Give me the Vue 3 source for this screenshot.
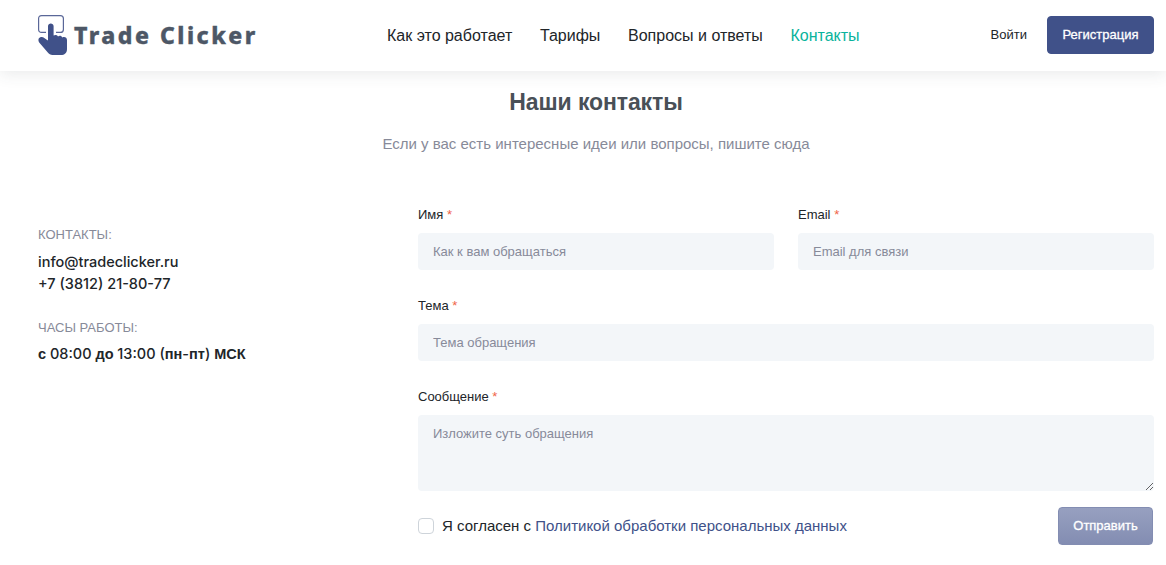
<script setup>
import { ref } from 'vue';

const navItems = [
  { id: 'how', title: 'Как это работает' },
  { id: 'tariffs', title: 'Тарифы' },
  { id: 'faq', title: 'Вопросы и ответы' },
  { id: 'contacts', title: 'Контакты' },
];
const activeItem = ref('contacts');

const form = ref({
  name: '',
  email: '',
  subject: '',
  message: '',
  agree: false,
});

function onSubmit() {
  // Without consent the form is not sent
  if (!form.value.agree) return;
  form.value = { name: '', email: '', subject: '', message: '', agree: false };
}
</script>

<template>
  <div class="page">
    <header class="header">
      <a class="logo">
        <svg class="logo-icon" width="30" height="41" viewBox="0 0 30 41">
          <path
            d="M8 17.4H3.6Q.6 17.4.6 14.4V3.6Q.6.6 3.6.6H22.4Q25.4.6 25.4 3.6V14.4Q25.4 17.4 22.4 17.4H18"
            fill="none"
            stroke="#5a6798"
            stroke-width="1.2"
          />
          <path
            d="M10 11.2C10 7.6 15.6 7.6 15.6 11.2V20.6C17.4 19.4 19.2 20 20 21.4C21.8 20.3 23.6 21 24.3 22.5C26.6 21.4 29 22.6 29 25V34C29 38 26.4 40 23 40H14.5C12.4 40 11 39.2 9.8 37.6L1.2 27.4C-.6 24.8 .8 21.6 4 22C6.4 22.3 7.6 24.4 10 25.6Z"
            fill="#405189"
          />
        </svg>
        <span class="logo-text">Trade Clicker</span>
      </a>
      <nav class="nav">
        <a
          v-for="item in navItems"
          :key="item.id"
          class="nav-link"
          :class="{ active: item.id === activeItem }"
          @click="activeItem = item.id"
        >{{ item.title }}</a>
      </nav>
      <div class="auth">
        <a class="login">Войти</a>
        <button class="btn btn-primary">Регистрация</button>
      </div>
    </header>

    <main class="content">
      <div class="heading">
        <h3>Наши контакты</h3>
        <p>Если у вас есть интересные идеи или вопросы, пишите сюда</p>
      </div>

      <div class="columns">
        <aside class="info">
          <div class="info-title">КОНТАКТЫ:</div>
          <div class="info-text email">info@tradeclicker.ru</div>
          <div class="info-text phone">+7 (3812) 21-80-77</div>
          <div class="info-title hours-title">ЧАСЫ РАБОТЫ:</div>
          <div class="info-text hours"><b>с</b> 08:00 <b>до</b> 13:00 (<b>пн</b>-<b>пт</b>) <b>МСК</b></div>
        </aside>

        <form class="form" @submit.prevent="onSubmit">
          <div class="row">
            <div class="form-group">
              <label for="name">Имя <span class="required">*</span></label>
              <input id="name" v-model="form.name" type="text" placeholder="Как к вам обращаться" />
            </div>
            <div class="form-group">
              <label for="email">Email <span class="required">*</span></label>
              <input id="email" v-model="form.email" type="text" placeholder="Email для связи" />
            </div>
          </div>
          <div class="form-group">
            <label for="subject">Тема <span class="required">*</span></label>
            <input id="subject" v-model="form.subject" type="text" placeholder="Тема обращения" />
          </div>
          <div class="form-group message">
            <label for="message">Сообщение <span class="required">*</span></label>
            <textarea id="message" v-model="form.message" placeholder="Изложите суть обращения"></textarea>
          </div>
          <div class="form-footer">
            <label class="agree">
              <input v-model="form.agree" type="checkbox" class="checkbox" />
              <span class="agree-text">Я согласен с <a class="policy">Политикой обработки персональных данных</a></span>
            </label>
            <button type="submit" class="btn btn-submit" :class="{ ready: form.agree }">Отправить</button>
          </div>
        </form>
      </div>
    </main>
  </div>
</template>

<style>
body {
  margin: 0;
  background: #fff;
}
</style>

<style scoped>
* {
  box-sizing: border-box;
}
.page {
  height: 565px;
  overflow: hidden;
  font-family: "Liberation Sans", Arial, sans-serif;
  font-size: 13px;
  color: #212529;
}
.header {
  display: flex;
  height: 71px;
  padding: 0 12px 0 38px;
  background: #fff;
  box-shadow: 0 2px 16px rgba(56, 65, 74, 0.12);
}
.logo {
  display: flex;
  width: 349px;
  padding-top: 15px;
}
.logo-text {
  margin-left: 6px;
  font-family: "Noto Sans", sans-serif;
  font-size: 23px;
  font-weight: 800;
  line-height: 40px;
  letter-spacing: 2.5px;
  color: #4d5766;
  white-space: nowrap;
  -webkit-text-stroke: 0.4px #4d5766;
}
.nav {
  display: flex;
  gap: 27.7px;
  line-height: 71px;
}
.nav-link {
  font-size: 16px;
  cursor: pointer;
  white-space: nowrap;
}
.nav-link.active {
  color: #0ab39c;
}
.auth {
  display: flex;
  margin-left: auto;
  padding-top: 16px;
}
.login {
  margin-right: 20px;
  line-height: 37px;
}
.btn {
  height: 38px;
  padding: 0 0 2px;
  border: 1px solid #405189;
  border-radius: 4px;
  font-family: inherit;
  font-size: 13px;
  color: #fff;
  cursor: pointer;
}
.btn-primary {
  width: 107px;
  background: #405189;
  -webkit-text-stroke: 0.3px #fff;
}
.content {
  padding: 0 12px 0 38px;
}
.heading {
  text-align: center;
}
.heading h3 {
  margin: 0;
  padding-top: 17px;
  font-size: 23px;
  line-height: 28px;
  letter-spacing: -0.1px;
  color: #495057;
}
.heading p {
  margin: 17px 0 0;
  font-size: 15px;
  line-height: 22px;
  color: #878a99;
}
.columns {
  display: flex;
  padding-top: 50px;
}
.info {
  width: 380px;
  padding-top: 20px;
}
.info-title {
  font-size: 13px;
  line-height: 20px;
  color: #878a99;
}
.info-text {
  font-family: Inter, "Liberation Sans", sans-serif;
  font-size: 14.5px;
  font-weight: 500;
  line-height: 22px;
}
.info-text.email {
  margin-top: 6px;
}
.info-text b {
  font-family: "Liberation Sans", Arial, sans-serif;
  font-weight: 700;
}
.hours-title {
  margin-top: 23px;
}
.info-text.hours {
  margin-top: 5px;
}
.form {
  flex: 1;
}
.row {
  display: flex;
  gap: 24px;
}
.form-group {
  flex: 1;
  height: 91px;
}
.form-group label {
  display: block;
  height: 28px;
  line-height: 19px;
}
.required {
  color: #f06548;
}
.form-group input,
.form-group textarea {
  display: block;
  width: 100%;
  height: 37px;
  padding: 0 15px;
  border: none;
  border-radius: 4px;
  background: #f3f6f9;
  font-family: inherit;
  font-size: 13px;
  color: #212529;
  outline: none;
}
.form-group textarea {
  height: 76px;
  padding-top: 9px;
  line-height: 19px;
  resize: vertical;
}
.form-group input::placeholder,
.form-group textarea::placeholder {
  color: #878a99;
  opacity: 1;
}
.form-group.message {
  height: 120px;
}
.form-footer {
  display: flex;
  justify-content: space-between;
  align-items: flex-start;
  padding-right: 1px;
}
.agree {
  display: flex;
  align-items: center;
  height: 38px;
  font-size: 15px;
}
.agree-text {
  padding-bottom: 2px;
}
.checkbox {
  width: 16px;
  height: 16px;
  margin: 0 8px 0 0;
  border: 1px solid #ced4da;
  border-radius: 4px;
  background: #fff;
  appearance: none;
}
.checkbox:checked {
  border-color: #405189;
  background: #405189;
}
.policy {
  color: #405189;
}
.btn-submit {
  width: 95px;
  border-color: #838db2;
  background: linear-gradient(#97a0c0, #838db2);
  -webkit-text-stroke: 0.3px #fff;
}
.btn-submit.ready {
  border-color: #405189;
  background: #405189;
}
</style>
